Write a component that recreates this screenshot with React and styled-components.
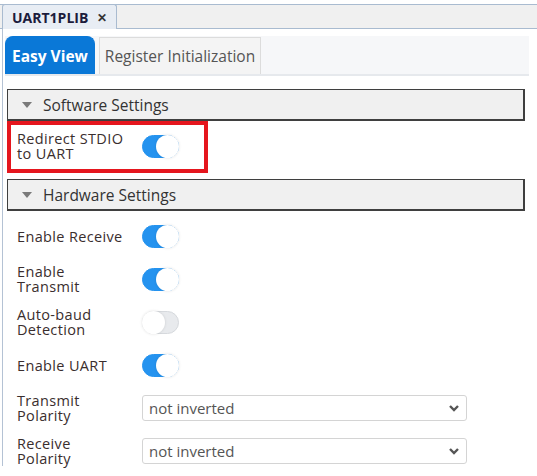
import styled, { createGlobalStyle } from "styled-components";

const Global = createGlobalStyle`
  html, body {
    margin: 0;
    padding: 0;
    background: #ffffff;
    font-family: "Open Sans", "Noto Sans", sans-serif;
    color: #333;
  }
  * { box-sizing: border-box; }
`;

const Page = styled.div`
  width: 537px;
  height: 476px;
  overflow: hidden;
  background: #fff;
`;

const EditorTabs = styled.div`
  height: 25px;
  margin-top: 4px;
  background: #f0f0f0;
  border-top: 1px solid #a9bbd0;
  border-bottom: 1px solid #a9bbd0;
  display: flex;
  align-items: stretch;
  padding-left: 2px;
`;

const EditorTab = styled.div`
  display: flex;
  align-items: center;
  gap: 9px;
  padding: 0 9px;
  margin-top: -1px;
  margin-bottom: -1px;
  background: #e8edf4;
  border: 1px solid #a9bbd0;
  border-bottom: none;
  border-radius: 3px 3px 0 0;
  font-weight: 700;
  font-size: 14px;
  color: #1c1c3c;
`;

const Close = styled.span`
  font-size: 12px;
  font-weight: 700;
  color: #333;
`;

const Body = styled.div`
  border-left: 1px solid #b4c2d4;
  margin-left: 2px;
  padding: 7px 0 0 0;
`;

const TabStrip = styled.div`
  display: flex;
  align-items: flex-end;
  gap: 4px;
  margin: 0 8px 0 2px;
  height: 40px;
  background: #f6f7f9;
  border-bottom: 2px solid #e6e9ed;
`;

const ViewTab = styled.div`
  height: ${(p) => (p.$active ? "38px" : "37px")};
  display: flex;
  align-items: center;
  padding: 0 ${(p) => (p.$active ? "6px" : "5px")};
  background: ${(p) => (p.$active ? "#0a78d7" : "#f4f4f4")};
  color: ${(p) => (p.$active ? "#fff" : "#555")};
  font-weight: ${(p) => (p.$active ? 700 : 400)};
  font-size: 15.5px;
  border: 1px solid ${(p) => (p.$active ? "#0a78d7" : "#dcdcdc")};
  border-bottom: none;
  border-radius: ${(p) => (p.$active ? "8px 8px 0 0" : "0")};
`;

const Sections = styled.div`
  padding: 13px 12px 0 4px;
`;

const SectionHeader = styled.div`
  height: 32px;
  display: flex;
  align-items: center;
  gap: 11px;
  padding-left: 14px;
  background: #f0f0f0;
  border: 1px solid #3f3f3f;
  border-right-width: 2px;
  border-bottom-width: 2px;
  font-size: 15.5px;
  color: #333;
  margin-top: ${(p) => p.$top || "0"};
`;

const Caret = styled.span`
  width: 0;
  height: 0;
  border-left: 5px solid transparent;
  border-right: 5px solid transparent;
  border-top: 6px solid #7a7a7a;
`;

const Highlight = styled.div`
  width: 201px;
  border: 4px solid #e5161e;
  padding: 6px 0 8px 6px;
`;

const RowList = styled.div`
  display: flex;
  flex-direction: column;
  gap: 13px;
  padding: 10px 0 0 10px;
`;

const Row = styled.div`
  display: flex;
  align-items: center;
  min-height: 30px;
`;

const Label = styled.div`
  width: 125px;
  font-size: 14.5px;
  line-height: 15px;
  letter-spacing: 0.35px;
  color: #3a2e2e;
`;

const Toggle = styled.div`
  position: relative;
  width: 37px;
  height: 23px;
  border-radius: 12px;
  background: ${(p) => (p.$on ? "#2593ef" : "#e8eaed")};
  border: 1px solid ${(p) => (p.$on ? "#2593ef" : "#d6d9dd")};
  &::after {
    content: "";
    position: absolute;
    top: -1px;
    ${(p) => (p.$on ? "right: -1px;" : "left: -1px;")}
    width: 23px;
    height: 23px;
    border-radius: 50%;
    background: #fff;
    box-shadow: 0 0 3px rgba(0, 0, 0, 0.12);
  }
`;

const Select = styled.div`
  width: 325px;
  height: 26px;
  display: flex;
  align-items: center;
  justify-content: space-between;
  padding: 0 6px 0 6px;
  border: 1px solid #d4d4d4;
  border-radius: 3px;
  font-size: 15px;
  color: #555;
`;

const Chevron = () => (
  <svg width="12" height="8" viewBox="0 0 12 8">
    <path d="M2 2 L6 6 L10 2" fill="none" stroke="#555" strokeWidth="2.4" />
  </svg>
);

const hardware = [
  { label: "Enable Receive", kind: "toggle", on: true },
  { label: ["Enable", "Transmit"], kind: "toggle", on: true },
  { label: ["Auto-baud", "Detection"], kind: "toggle", on: false },
  { label: "Enable UART", kind: "toggle", on: true },
  { label: ["Transmit", "Polarity"], kind: "select", value: "not inverted" },
  { label: ["Receive", "Polarity"], kind: "select", value: "not inverted" },
];

const LabelText = ({ text }) =>
  Array.isArray(text) ? (
    <Label>
      {text[0]}
      <br />
      {text[1]}
    </Label>
  ) : (
    <Label>{text}</Label>
  );

export default function App() {
  return (
    <Page>
      <Global />
      <EditorTabs>
        <EditorTab>
          UART1PLIB <Close>✕</Close>
        </EditorTab>
      </EditorTabs>
      <Body>
        <TabStrip>
          <ViewTab $active>Easy View</ViewTab>
          <ViewTab>Register Initialization</ViewTab>
        </TabStrip>
        <Sections>
          <SectionHeader>
            <Caret />
            Software Settings
          </SectionHeader>
          <Highlight>
            <Row>
              <LabelText text={["Redirect STDIO", "to UART"]} />
              <Toggle $on />
            </Row>
          </Highlight>
          <SectionHeader $top="6px">
            <Caret />
            Hardware Settings
          </SectionHeader>
          <RowList>
            {hardware.map((item, i) => (
              <Row key={i}>
                <LabelText text={item.label} />
                {item.kind === "toggle" ? (
                  <Toggle $on={item.on} />
                ) : (
                  <Select>
                    {item.value}
                    <Chevron />
                  </Select>
                )}
              </Row>
            ))}
          </RowList>
        </Sections>
      </Body>
    </Page>
  );
}
